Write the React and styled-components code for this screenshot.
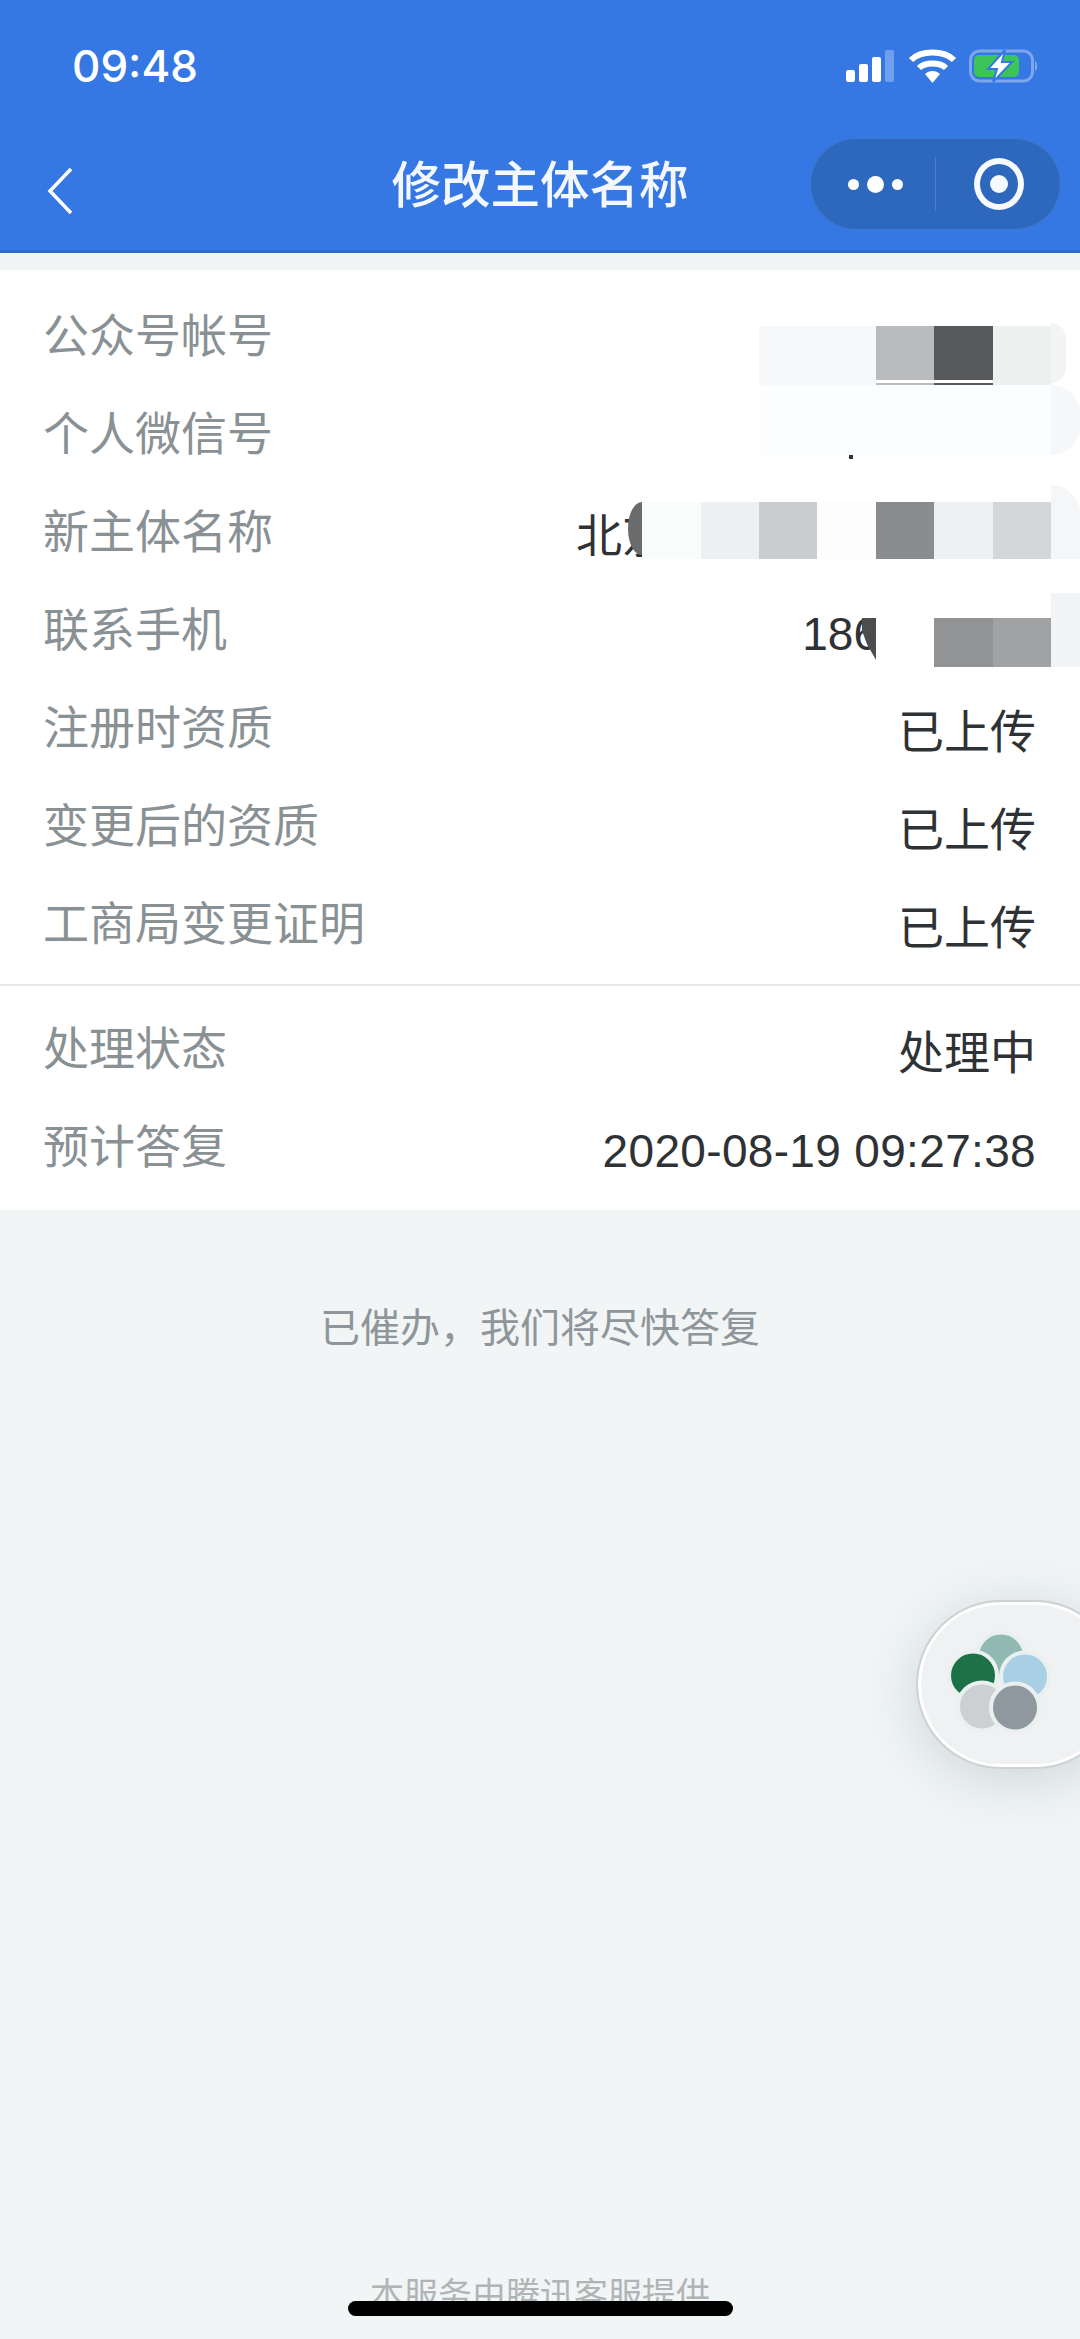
import React from "react"
import styled, { createGlobalStyle } from "styled-components"

const GlobalStyle = createGlobalStyle`
  html, body {
    margin: 0;
    padding: 0;
    background: #f1f5f6;
  }
`

const Page = styled.div`
  position: relative;
  display: flex;
  flex-direction: column;
  width: 1080px;
  height: 2339px;
  overflow: hidden;
  background: #f1f5f6;
  font-family: "Liberation Sans", "Noto Sans CJK SC", sans-serif;
`

const StatusBar = styled.div`
  display: flex;
  align-items: center;
  justify-content: space-between;
  height: 116px;
  padding: 16px 42px 0 72px;
  box-sizing: border-box;
  background: #3578e3;
`

const Clock = styled.span`
  font-family: Inter, sans-serif;
  font-size: 44px;
  font-weight: 500;
  color: #fff;
`

const StatusIcons = styled.svg`
  display: block;
`

const NavBar = styled.div`
  position: relative;
  display: flex;
  align-items: center;
  justify-content: space-between;
  height: 137px;
  padding: 0 19px 0 47px;
  box-sizing: border-box;
  background: #3578e3;
  border-bottom: 3px solid #2a6cc8;
`

const BackIcon = styled.svg`
  display: block;
  margin-top: 16px;
`

const Title = styled.div`
  position: absolute;
  left: 0;
  right: 0;
  top: 23px;
  text-align: center;
  font-size: 49.5px;
  font-weight: 500;
  line-height: 94px;
  color: #f4f8fe;
  pointer-events: none;
`

const Capsule = styled.div`
  display: flex;
  align-items: center;
  width: 251px;
  height: 92px;
  margin-top: 2px;
  border-radius: 46px;
  background: #2d68bc;
  box-shadow: inset 0 0 0 1px #3f7cd2;
`

const CapsuleSide = styled.div`
  display: flex;
  align-items: center;
  justify-content: center;
  flex: ${(p) => p.$grow};
  height: 54px;
  & + & {
    border-left: 1px solid #4a80cf;
  }
`

const Dots = styled.div`
  display: flex;
  align-items: center;
  gap: 8px;
  margin-left: 7px;
`

const Dot = styled.span`
  width: ${(p) => p.$size}px;
  height: ${(p) => p.$size}px;
  border-radius: 50%;
  background: #fff;
`

const Target = styled.div`
  display: flex;
  align-items: center;
  justify-content: center;
  width: 50px;
  height: 52px;
  margin-left: 2px;
  box-sizing: border-box;
  border: 6px solid #f6f9fe;
  border-radius: 50%;
  &::after {
    content: "";
    width: 18px;
    height: 18px;
    border-radius: 50%;
    background: #f6f9fe;
  }
`

const Card = styled.div`
  margin-top: 17px;
  padding: 17px 0 14px;
  background: #fff;
`

const Row = styled.div`
  position: relative;
  display: flex;
  align-items: center;
  justify-content: space-between;
  height: 98px;
  padding: 0 44px 0 43px;
`

const Label = styled.span`
  font-size: 46px;
  line-height: 60px;
  color: #899194;
  font-weight: 400;
  margin-top: -1px;
`

const Value = styled.span`
  font-size: 46px;
  line-height: 60px;
  color: #2f3235;
  margin-top: 7px;
  margin-right: ${(p) => p.$inset || 0}px;
  letter-spacing: ${(p) => p.$track || 0}px;
`

const Divider = styled.div`
  height: 2px;
  margin: 11px 0 14px;
  background: #e6e8e9;
`

// pixelated cover over private values, sits on top of the row
const Mosaic = styled.div`
  position: absolute;
  top: ${(p) => p.$top}px;
  right: 29px;
  display: flex;
  height: ${(p) => p.$height}px;
`

const Cell = styled.div`
  width: 58.4px;
  height: 100%;
  background: ${(p) => p.$split
    ? `linear-gradient(${p.$tone} 0 54px, #fff 54px 57px, ${p.$tone} 57px)`
    : p.$tone};
`

const Bulge = styled.div`
  position: absolute;
  left: 100%;
  top: ${(p) => p.$top}px;
  bottom: ${(p) => p.$bottom}px;
  width: ${(p) => p.$width}px;
  background: ${(p) => p.$tone};
  border-radius: ${(p) => p.$radius};
`

const Speck = styled.div`
  position: absolute;
  left: 849px;
  top: 70px;
  width: 4px;
  height: 4px;
  background: #333639;
`

const BlobCover = styled.div`
  position: absolute;
  left: 628px;
  top: 19px;
  width: 14px;
  height: 53px;
  background: #6a6b6d;
  border-radius: 14px 0 0 14px / 26px 0 0 26px;
`

const WedgeCover = styled.div`
  position: absolute;
  left: 862px;
  top: 37px;
  width: 14px;
  height: 42px;
  background: #4c4d4f;
  clip-path: polygon(0 0, 100% 0, 100% 100%, 35% 62%, 0 30%);
`

const Note = styled.div`
  margin-top: 88px;
  text-align: center;
  font-size: 40px;
  line-height: 60px;
  color: #8f9699;
`

const Footer = styled.div`
  margin-top: auto;
  padding-bottom: 24px;
  text-align: center;
  font-size: 34px;
  line-height: 40px;
  color: #b0b4b5;
`

const HomeBar = styled.div`
  position: absolute;
  left: 348px;
  top: 2301px;
  width: 385px;
  height: 15px;
  border-radius: 8px;
  background: #000;
`

const Floater = styled.div`
  position: absolute;
  left: 918px;
  top: 1602px;
  display: flex;
  align-items: center;
  width: 200px;
  height: 165px;
  box-sizing: border-box;
  padding-left: 29px;
  border-radius: 83px;
  background: #eff1f2;
  border: 3px solid #fff;
  outline: 2px solid #cfd2d3;
  box-shadow: 0 10px 60px rgba(120, 135, 140, 0.3);
`

const mosaics = {
  account: [
    ["#f7f8f9"], ["#f7f8f9"], ["#babbbc", true], ["#58595b", true], ["#eeefef"],
  ],
  wechat: [
    ["#fcfdfe"], ["#fcfdfe"], ["#fcfdfe"], ["#fcfdfe"], ["#fcfdfe"],
  ],
  company: [
    ["#fafbfb"], ["#eeeff0"], ["#cbcccd"], ["#fdfdfd"], ["#8b8c8e"], ["#eff0f1"], ["#d5d6d7"],
  ],
  phone: [["#ffffff"], ["#929394"], ["#a1a2a3"]],
}

const petals = [
  { cx: 25, cy: 17.5, fill: "#8fb9b1" },
  { cx: 49, cy: 37.5, fill: "#a9cfe4" },
  { cx: -3, cy: 36.5, fill: "#1c7246" },
  { cx: 6, cy: 67.5, fill: "#cdd0d3" },
  { cx: 39, cy: 68.5, fill: "#8f989e" },
]

const Cells = ({ list }) =>
  list.map(([tone, split], i) => <Cell key={i} $tone={tone} $split={split} />)

const App = () => (
  <Page>
    <GlobalStyle />
    <StatusBar>
      <Clock>09:48</Clock>
      <StatusIcons width="196" height="34" viewBox="0 0 196 34">
        <rect x="4" y="21" width="9" height="12" rx="2" fill="#fff" />
        <rect x="17" y="15" width="9" height="18" rx="2" fill="#fff" />
        <rect x="30" y="8" width="9" height="25" rx="2" fill="#fff" />
        <rect x="43" y="1" width="9" height="32" rx="2" fill="#6fa0ee" />
        <g fill="none" stroke="#fff" strokeWidth="6">
          <path d="M69 11 C 79 1, 102 1, 112 11" />
          <path d="M77 19 C 83 13, 98 13, 104 19" />
        </g>
        <path d="M83 25 C 87 21, 94 21, 98 25 L 90.5 34 Z" fill="#fff" />
        <rect x="128.500" y="2" width="62" height="30" rx="9" fill="none" stroke="#7fa6ea" strokeWidth="3" />
        <path d="M193 12 C 196 13, 196 21, 193 22 Z" fill="#7fa6ea" />
        <rect x="132" y="6" width="45" height="22" rx="5" fill="#3bc45a" />
        <path d="M163 1 L 146 20 L 155 20 L 151 33 L 170 13 L 160 13 Z" fill="#fff" stroke="#3578e3" strokeWidth="2" />
      </StatusIcons>
    </StatusBar>
    <NavBar>
      <BackIcon width="26" height="48" viewBox="0 0 26 48">
        <path d="M24 2 L 3 24 L 24 46" fill="none" stroke="#fff" strokeWidth="3.500" />
      </BackIcon>
      <Title>修改主体名称</Title>
      <Capsule>
        <CapsuleSide $grow="125">
          <Dots>
            <Dot $size={11} />
            <Dot $size={17} />
            <Dot $size={11} />
          </Dots>
        </CapsuleSide>
        <CapsuleSide $grow="126">
          <Target />
        </CapsuleSide>
      </Capsule>
    </NavBar>
    <Card>
      <Row>
        <Label>公众号帐号</Label>
        <Mosaic $top={39} $height={59}>
          <Cells list={mosaics.account} />
          <Bulge $top={-3} $bottom={2} $width={15} $tone="#f3f5f5" $radius="0 30px 30px 0" />
        </Mosaic>
      </Row>
      <Row>
        <Label>个人微信号</Label>
        <Mosaic $top={0} $height={70}>
          <Cells list={mosaics.wechat} />
          <Bulge $top={0} $bottom={0} $width={29} $tone="#f5f7f8" $radius="0 35px 35px 0" />
        </Mosaic>
        <Speck />
      </Row>
      <Row>
        <Label>新主体名称</Label>
        <Value $inset={368}>北京</Value>
        <BlobCover />
        <Mosaic $top={19} $height={57}>
          <Cells list={mosaics.company} />
          <Bulge $top={-17} $bottom={0} $width={29} $tone="#f5f6f7" $radius="0 32px 0 0" />
        </Mosaic>
      </Row>
      <Row>
        <Label>联系手机</Label>
        <Value $inset={157}>186</Value>
        <WedgeCover />
        <Mosaic $top={37} $height={49}>
          <Cells list={mosaics.phone} />
          <Bulge $top={-25} $bottom={0} $width={29} $tone="#f3f4f5" $radius="0" />
        </Mosaic>
      </Row>
      <Row>
        <Label>注册时资质</Label>
        <Value>已上传</Value>
      </Row>
      <Row>
        <Label>变更后的资质</Label>
        <Value>已上传</Value>
      </Row>
      <Row>
        <Label>工商局变更证明</Label>
        <Value>已上传</Value>
      </Row>
      <Divider />
      <Row>
        <Label>处理状态</Label>
        <Value>处理中</Value>
      </Row>
      <Row>
        <Label>预计答复</Label>
        <Value $track={0.33}>2020-08-19 09:27:38</Value>
      </Row>
    </Card>
    <Note>已催办，我们将尽快答复</Note>
    <Floater>
      <svg width="100" height="100" viewBox="-26 -4 100 100" overflow="visible">
        {petals.map((p) => (
          <circle key={p.fill} cx={p.cx} cy={p.cy} r="24" fill={p.fill} stroke="#eaf0f0" strokeWidth="4" />
        ))}
      </svg>
    </Floater>
    <Footer>本服务由腾讯客服提供</Footer>
    <HomeBar />
  </Page>
)

export default App
